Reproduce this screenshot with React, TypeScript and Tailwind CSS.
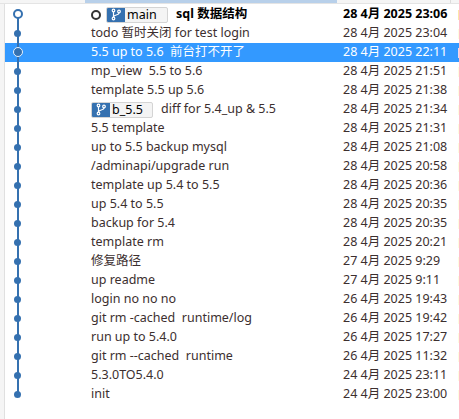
const commits = [
  { msg: "sql 数据结构", date: "28 4月 2025 23:06", head: true, branch: "main" },
  { msg: "todo 暂时关闭 for test login", date: "28 4月 2025 23:04" },
  { msg: "5.5 up to 5.6  前台打不开了", date: "28 4月 2025 22:11", selected: true },
  { msg: "mp_view  5.5 to 5.6", date: "28 4月 2025 21:51" },
  { msg: "template 5.5 up 5.6", date: "28 4月 2025 21:38" },
  { msg: "diff for 5.4_up & 5.5", date: "28 4月 2025 21:34", branch: "b_5.5" },
  { msg: "5.5 template", date: "28 4月 2025 21:31" },
  { msg: "up to 5.5 backup mysql", date: "28 4月 2025 21:08" },
  { msg: "/adminapi/upgrade run", date: "28 4月 2025 20:58" },
  { msg: "template up 5.4 to 5.5", date: "28 4月 2025 20:36" },
  { msg: "up 5.4 to 5.5", date: "28 4月 2025 20:35" },
  { msg: "backup for 5.4", date: "28 4月 2025 20:35" },
  { msg: "template rm", date: "28 4月 2025 20:21" },
  { msg: "修复路径", date: "27 4月 2025 9:29" },
  { msg: "up readme", date: "27 4月 2025 9:11" },
  { msg: "login no no no", date: "26 4月 2025 19:43" },
  { msg: "git rm -cached  runtime/log", date: "26 4月 2025 19:42" },
  { msg: "run up to 5.4.0", date: "26 4月 2025 17:27" },
  { msg: "git rm --cached  runtime", date: "26 4月 2025 11:32" },
  { msg: "5.3.0TO5.4.0", date: "24 4月 2025 23:11" },
  { msg: "init", date: "24 4月 2025 23:00" },
];

const BranchIcon = () => (
  <svg width="12" height="13" viewBox="0 0 12 13" fill="none" stroke="white" strokeWidth="1.2">
    <circle cx="3.500" cy="2.500" r="1.300" />
    <circle cx="9" cy="3.500" r="1.300" />
    <circle cx="3.500" cy="10.500" r="1.300" />
    <path d="M3.500 4v5M3.500 9c0-2.500 5.500-1.500 5.500-4" />
  </svg>
);

const BranchTag = ({ name }: { name: string }) => (
  <span className="flex h-[16px] w-[62px] items-center overflow-hidden rounded-[2px] border border-[#d4d4d4] bg-[#f4f4f4]">
    <span className="flex h-full w-[18px] shrink-0 items-center justify-center bg-[#3571b0]">
      <BranchIcon />
    </span>
    <span className="pl-[2px] leading-[14px] text-black">{name}</span>
  </span>
);

const Graph = ({ first, last, head, selected }: { first: boolean; last: boolean; head?: boolean; selected?: boolean }) => (
  <div className="relative h-full w-[17px] shrink-0">
    {!first && <div className="absolute left-[7px] top-0 h-1/2 w-[2px] bg-[#3571b0]" />}
    {!last && <div className="absolute bottom-0 left-[7px] h-1/2 w-[2px] bg-[#3571b0]" />}
    {head ? (
      <div className="absolute left-[3px] top-[4px] h-[10px] w-[10px] rounded-full border-2 border-[#3571b0] bg-white" />
    ) : selected ? (
      <div className="absolute left-[3px] top-[4px] h-[10px] w-[10px] rounded-full border border-[#e8f2fc] bg-[#3571b0]" />
    ) : (
      <div className="absolute left-[4px] top-[6px] h-[7px] w-[7px] rounded-full bg-[#3571b0]" />
    )}
  </div>
);

export default function App() {
  return (
    <div className="h-[419px] w-[459px] overflow-hidden bg-white font-['Noto_Sans','Noto_Sans_CJK_SC',sans-serif] text-[12.5px] text-[#3c2f2f]">
      <div className="flex h-[4px] border-b border-[#e4e4e4]">
        <div className="w-[85px] bg-[#f5f5f5]" />
        <div className="w-[252px] bg-[#b8d0ea]" />
        <div className="w-[114px] border-r border-[#dcdcdc] bg-[#f5f5f5]" />
        <div className="flex-1 bg-[#f5f5f5]" />
      </div>
      <div className="flex">
        <div className="h-[415px] w-[5px] shrink-0 border-r border-[#e0e0e0] bg-[#f5f5f5]" />
        <div className="min-w-0 flex-1 pt-[1px]">
          {commits.map((c, i) => (
            <div key={i} className={`flex h-[19px] items-center ${c.selected ? "bg-[#3399ff] text-white" : ""}`}>
              <div className="h-[19px] pl-[5px]">
                <Graph first={i === 0} last={i === commits.length - 1} head={c.head} selected={c.selected} />
              </div>
              <div className="flex min-w-0 flex-1 items-center pl-[64px]">
                {c.head && <div className="mr-[5px] h-[10px] w-[10px] rounded-full border-2 border-[#333]" />}
                {c.branch && (
                  <div className="mr-[8px]">
                    <BranchTag name={c.branch} />
                  </div>
                )}
                <span className={`whitespace-pre ${c.head ? "font-bold text-black" : ""}`}>{c.msg}</span>
              </div>
              <div className={`w-[108px] shrink-0 whitespace-pre ${c.head ? "font-bold text-black" : ""}`}>{c.date}</div>
              <div className="w-[7px] shrink-0" />
              <div className={`h-[10px] w-[1px] shrink-0 ${c.head ? "bg-[#fde6a8]" : c.selected ? "bg-[#f0d8ea]" : "bg-[#fffbe0]"}`} />
            </div>
          ))}
        </div>
      </div>
    </div>
  );
}
